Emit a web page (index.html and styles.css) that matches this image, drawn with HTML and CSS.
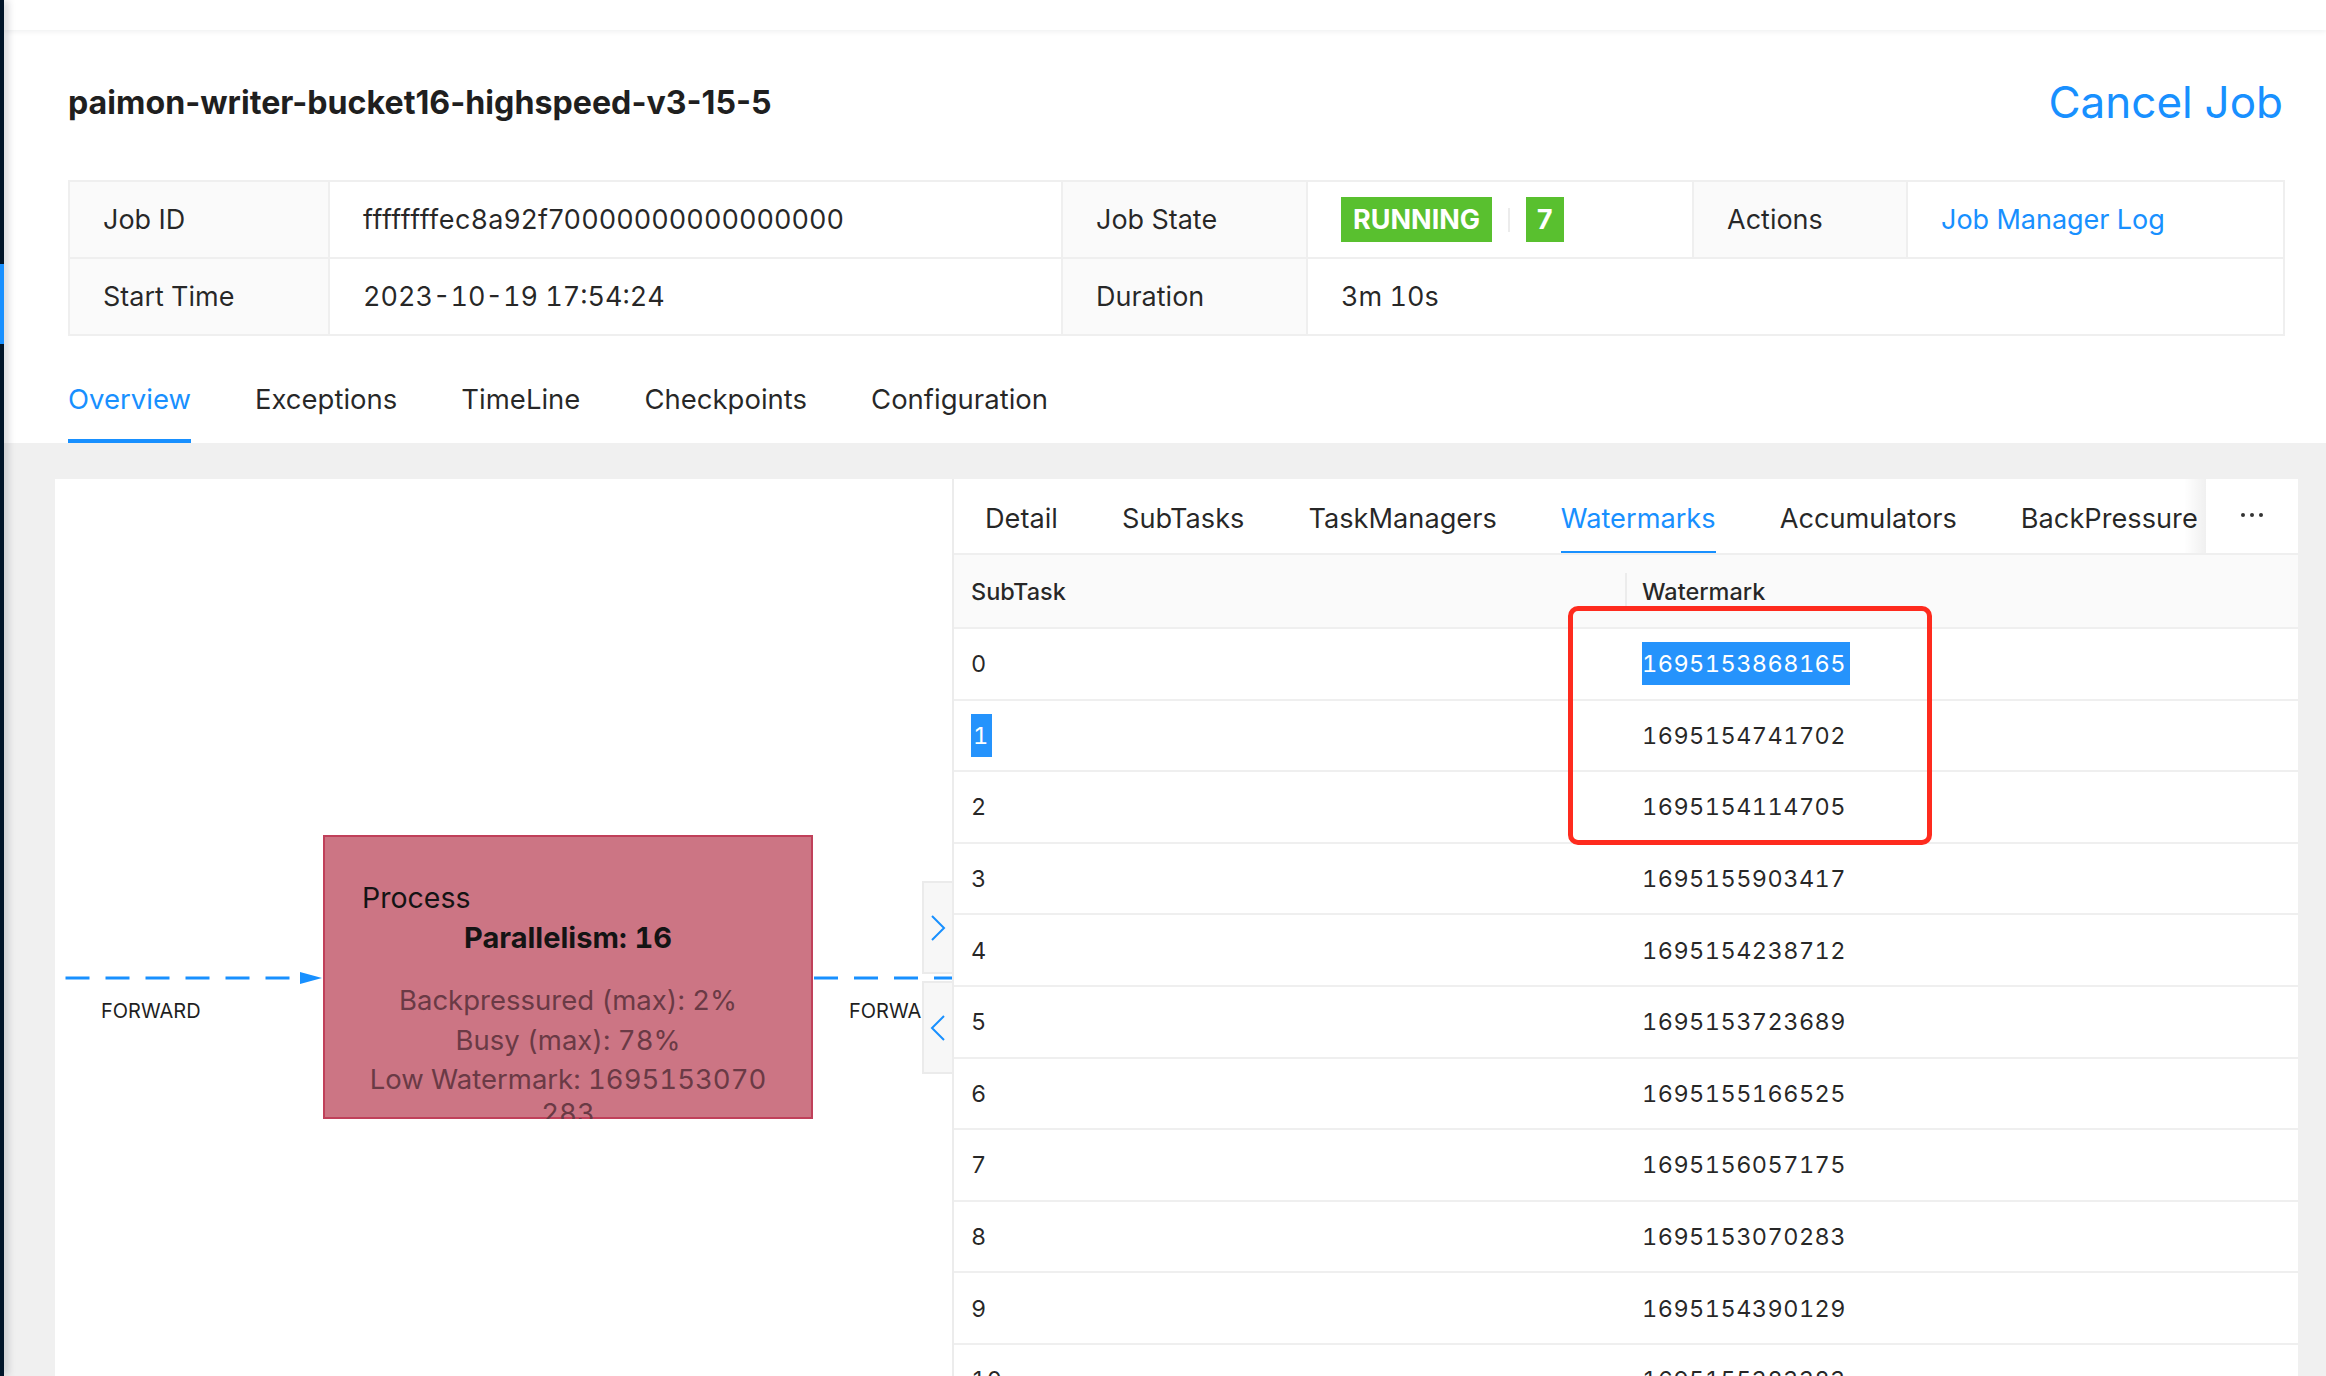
FILE: index.html
```html
<!DOCTYPE html>
<html lang="en">
<head>
<meta charset="utf-8">
<title>Flink Job - paimon-writer-bucket16-highspeed-v3-15-5</title>
<link rel="stylesheet" href="styles.css">
</head>
<body>
<div class="app">
  <aside class="sider"><div class="sider-active"></div></aside>
  <div class="main">
    <div class="topbar"></div>
    <section class="job-header">
      <div class="title-row">
        <h1 class="job-name">paimon-writer-bucket16-highspeed-v3-15-5</h1>
        <a class="cancel-job">Cancel Job</a>
      </div>
      <table class="desc">
        <colgroup>
          <col class="c1"><col class="c2"><col class="c3"><col class="c4"><col class="c5"><col class="c6">
        </colgroup>
        <tr>
          <th>Job ID</th>
          <td class="job-id">ffffffffec8a92f70000000000000000</td>
          <th>Job State</th>
          <td><span class="tag">RUNNING</span><span class="tag-divider"></span><span class="tag tag-num">7</span></td>
          <th>Actions</th>
          <td><a class="link">Job Manager Log</a></td>
        </tr>
        <tr>
          <th>Start Time</th>
          <td class="date">2023-10-19 17:54:24</td>
          <th>Duration</th>
          <td colspan="3">3m 10s</td>
        </tr>
      </table>
      <nav class="tabs">
        <a class="tab active">Overview</a>
        <a class="tab">Exceptions</a>
        <a class="tab">TimeLine</a>
        <a class="tab">Checkpoints</a>
        <a class="tab">Configuration</a>
      </nav>
    </section>

    <section class="content">
      <div class="graph">
        <svg class="edges" width="897" height="895" viewBox="0 0 897 895">
          <line x1="10.5" y1="499" x2="246" y2="499" class="edge"/>
          <polygon points="245,493 267,499 245,505" fill="#1890ff"/>
          <line x1="759" y1="499" x2="897" y2="499" class="edge"/>
        </svg>
        <div class="node">
          <div class="node-name">Process</div>
          <div class="node-par">Parallelism: 16</div>
          <div class="node-metrics">
            <div>Backpressured (max): 2%</div>
            <div>Busy (max): 78%</div>
            <div>Low Watermark: 1695153070</div>
            <div class="node-wrap">283</div>
          </div>
        </div>
        <div class="edge-label edge-label-left">FORWARD</div>
        <div class="edge-label edge-label-right">FORWARD</div>
        <div class="collapse collapse-top">
          <svg width="16" height="26" viewBox="0 0 16 26"><polyline points="2,1 14,13 2,25" /></svg>
        </div>
        <div class="collapse collapse-bottom">
          <svg width="16" height="26" viewBox="0 0 16 26"><polyline points="14,1 2,13 14,25" /></svg>
        </div>
      </div>

      <div class="detail">
        <div class="detail-tabs">
          <div class="detail-tab-list">
            <a class="dtab">Detail</a>
            <a class="dtab">SubTasks</a>
            <a class="dtab">TaskManagers</a>
            <a class="dtab active">Watermarks</a>
            <a class="dtab">Accumulators</a>
            <a class="dtab">BackPressure</a>
          </div>
          <div class="detail-tab-ops">
            <svg width="24" height="6" viewBox="0 0 24 6"><circle cx="3" cy="3" r="2"/><circle cx="12" cy="3" r="2"/><circle cx="21" cy="3" r="2"/></svg>
          </div>
        </div>
        <table class="wm-table">
          <colgroup><col class="wc1"><col class="wc2"></colgroup>
          <thead>
            <tr><th>SubTask</th><th class="sep">Watermark</th></tr>
          </thead>
          <tbody>
            <tr><td>0</td><td><span class="sel">1695153868165</span></td></tr>
            <tr><td><span class="sel sel-one">1</span></td><td>1695154741702</td></tr>
            <tr><td>2</td><td>1695154114705</td></tr>
            <tr><td>3</td><td>1695155903417</td></tr>
            <tr><td>4</td><td>1695154238712</td></tr>
            <tr><td>5</td><td>1695153723689</td></tr>
            <tr><td>6</td><td>1695155166525</td></tr>
            <tr><td>7</td><td>1695156057175</td></tr>
            <tr><td>8</td><td>1695153070283</td></tr>
            <tr><td>9</td><td>1695154390129</td></tr>
            <tr><td>10</td><td>1695155383383</td></tr>
          </tbody>
        </table>
        <div class="annotation"></div>
      </div>
    </section>
  </div>
</div>
</body>
</html>
```

FILE: styles.css
```css
* { box-sizing: border-box; }
html, body {
  margin: 0;
  padding: 0;
  width: 100%;
  height: 100%;
  overflow: hidden;
  background: #f0f0f0;
  font-family: "Inter", "Noto Sans", "Liberation Sans", sans-serif;
  font-variant-numeric: tabular-nums;
  color: rgba(0, 0, 0, 0.85);
}
a { text-decoration: none; cursor: pointer; }

.app {
  display: flex;
  height: 1376px;
}

.sider {
  width: 4px;
  flex: 0 0 4px;
  background: #001529;
  position: relative;
  z-index: 5;
  box-shadow: 2px 0 9px rgba(0, 21, 41, 0.35);
}
.sider-active {
  margin-top: 264px;
  height: 80px;
  background: #1890ff;
}

.main {
  flex: 1;
  display: flex;
  flex-direction: column;
  min-width: 0;
}

.topbar {
  height: 30px;
  background: #fff;
  position: relative;
  z-index: 2;
  box-shadow: 0 1px 6px rgba(0, 21, 41, 0.08);
}

/* ---------- job header ---------- */
.job-header {
  background: #fff;
  padding: 0 43px 0 64px;
}
.title-row {
  margin-top: 42px;
  height: 60px;
  display: flex;
  align-items: center;
  justify-content: space-between;
}
.job-name {
  margin: 0;
  font-size: 32.2px;
  font-weight: 700;
  color: #1f1f1f;
  font-variant-numeric: normal;
}
.cancel-job {
  font-size: 44px;
  color: #1890ff;
  line-height: 60px;
}

.desc {
  margin-top: 48px;
  width: 100%;
  border-collapse: collapse;
  table-layout: fixed;
  font-size: 27px;
  border: 2px solid #efefef;
}
.desc .c1 { width: 260px; }
.desc .c2 { width: 733px; }
.desc .c3 { width: 245px; }
.desc .c4 { width: 386px; }
.desc .c5 { width: 214px; }
.desc .c6 { width: 377px; }
.desc th, .desc td {
  border: 2px solid #efefef;
  height: 77px;
  padding: 0 33px;
  text-align: left;
  font-weight: 400;
  white-space: nowrap;
  vertical-align: middle;
}
.desc th { background: #fafafa; }
.desc .job-id { font-variant-numeric: normal; letter-spacing: 0.5px; }
.desc .date { letter-spacing: 0; }
.tag {
  display: inline-block;
  background: #59c02f;
  color: #fff;
  font-weight: 700;
  font-size: 27px;
  line-height: 45px;
  height: 45px;
  padding: 0 12px;
  vertical-align: middle;
}
.tag-num { padding: 0 10px; }
.tag-divider {
  display: inline-block;
  width: 2px;
  height: 24px;
  background: #ececec;
  margin: 0 16px;
  vertical-align: middle;
}
.link { color: #1890ff; }

.tabs {
  display: flex;
  gap: 64px;
  margin-top: 23px;
}
.tab {
  font-size: 27.5px;
  line-height: 40px;
  padding: 20px 0 20px;
  border-bottom: 4px solid transparent;
  color: rgba(0, 0, 0, 0.85);
}
.tab.active {
  color: #1890ff;
  border-bottom-color: #1890ff;
}

/* ---------- content ---------- */
.content {
  margin: 36px 28px 0 51px;
  flex: 1;
  display: flex;
  min-height: 0;
  overflow: hidden;
}

.graph {
  width: 897px;
  flex: 0 0 897px;
  background: #fff;
  position: relative;
  overflow: hidden;
}
.edges {
  position: absolute;
  left: 0;
  top: 0;
}
.edge {
  stroke: #1890ff;
  stroke-width: 3;
  stroke-dasharray: 24 16;
}
.node {
  position: absolute;
  left: 268px;
  top: 356px;
  width: 490px;
  height: 284px;
  background: #cc7584;
  box-shadow: inset 0 0 0 2px #c0405a;
  overflow: hidden;
  font-size: 27.5px;
  padding: 2px;
}
.node-name {
  margin: 41px 0 0 37px;
  line-height: 40px;
  font-size: 28.5px;
  color: #141414;
}
.node-par {
  text-align: center;
  line-height: 40px;
  font-size: 29px;
  font-weight: 700;
  color: #141414;
}
.node-metrics {
  margin-top: 23px;
  text-align: center;
  color: #6a3a45;
  line-height: 39.5px;
}
.node-wrap { margin-top: -6px; }
.edge-label {
  position: absolute;
  top: 520px;
  font-size: 20px;
  line-height: 24px;
  color: #1f1f1f;
  white-space: nowrap;
}
.edge-label-left { left: 46px; }
.edge-label-right { left: 794px; }

.collapse {
  position: absolute;
  left: 867px;
  width: 30px;
  height: 93px;
  background: #f7f7f7;
  border: 2px solid #ebebeb;
  border-right: 0;
  display: flex;
  align-items: center;
  justify-content: center;
}
.collapse-top { top: 402px; }
.collapse-bottom { top: 502px; }
.collapse polyline {
  fill: none;
  stroke: #1890ff;
  stroke-width: 2;
}

.detail {
  flex: 1;
  background: #fff;
  border-left: 2px solid #ececec;
  position: relative;
  min-width: 0;
}
.detail-tabs {
  display: flex;
  height: 76px;
  border-bottom: 2px solid #efefef;
}
.detail-tab-list {
  flex: 1;
  display: flex;
  gap: 64px;
  padding-left: 31px;
  overflow: hidden;
  white-space: nowrap;
  position: relative;
}
.detail-tab-list::after {
  content: "";
  position: absolute;
  right: 0;
  top: 0;
  bottom: 0;
  width: 22px;
  background: linear-gradient(to right, rgba(0, 0, 0, 0), rgba(0, 0, 0, 0.06));
}
.dtab {
  position: relative;
  font-size: 27.2px;
  line-height: 40px;
  padding-top: 20px;
  color: rgba(0, 0, 0, 0.85);
}
.dtab.active { color: #1890ff; }
.dtab.active::after {
  content: "";
  position: absolute;
  left: 0;
  right: 0;
  bottom: -2px;
  height: 4px;
  background: #1890ff;
}
.detail-tab-ops {
  width: 92px;
  flex: 0 0 92px;
  display: flex;
  align-items: center;
  justify-content: center;
  padding-bottom: 2px;
}
.detail-tab-ops circle { fill: #333; }

.wm-table {
  width: 100%;
  border-collapse: collapse;
  table-layout: fixed;
  font-size: 23.5px;
}
.wm-table .wc1 { width: 671px; }
.wm-table th {
  background: #fafafa;
  height: 73px;
  text-align: left;
  font-weight: 500;
  padding: 0 17px;
  border-bottom: 2px solid #efefef;
  position: relative;
  color: rgba(0, 0, 0, 0.85);
}
.wm-table th.sep::before {
  content: "";
  position: absolute;
  left: 0;
  top: 18px;
  height: 34px;
  width: 2px;
  background: #ececec;
}
.wm-table td {
  height: 71.6px;
  padding: 0 17px;
  border-bottom: 2px solid #efefef;
  color: rgba(0, 0, 0, 0.85);
  letter-spacing: 0.45px;
}
.sel {
  background: #2593fc;
  color: #fff;
  padding: 7px 4px 7px 0;
}
.sel-one { padding: 7px 3px 7px 2px; }

.annotation {
  position: absolute;
  left: 614px;
  top: 127px;
  width: 364px;
  height: 239px;
  border: 5px solid #fe2b1e;
  border-radius: 10px;
  pointer-events: none;
}
```
